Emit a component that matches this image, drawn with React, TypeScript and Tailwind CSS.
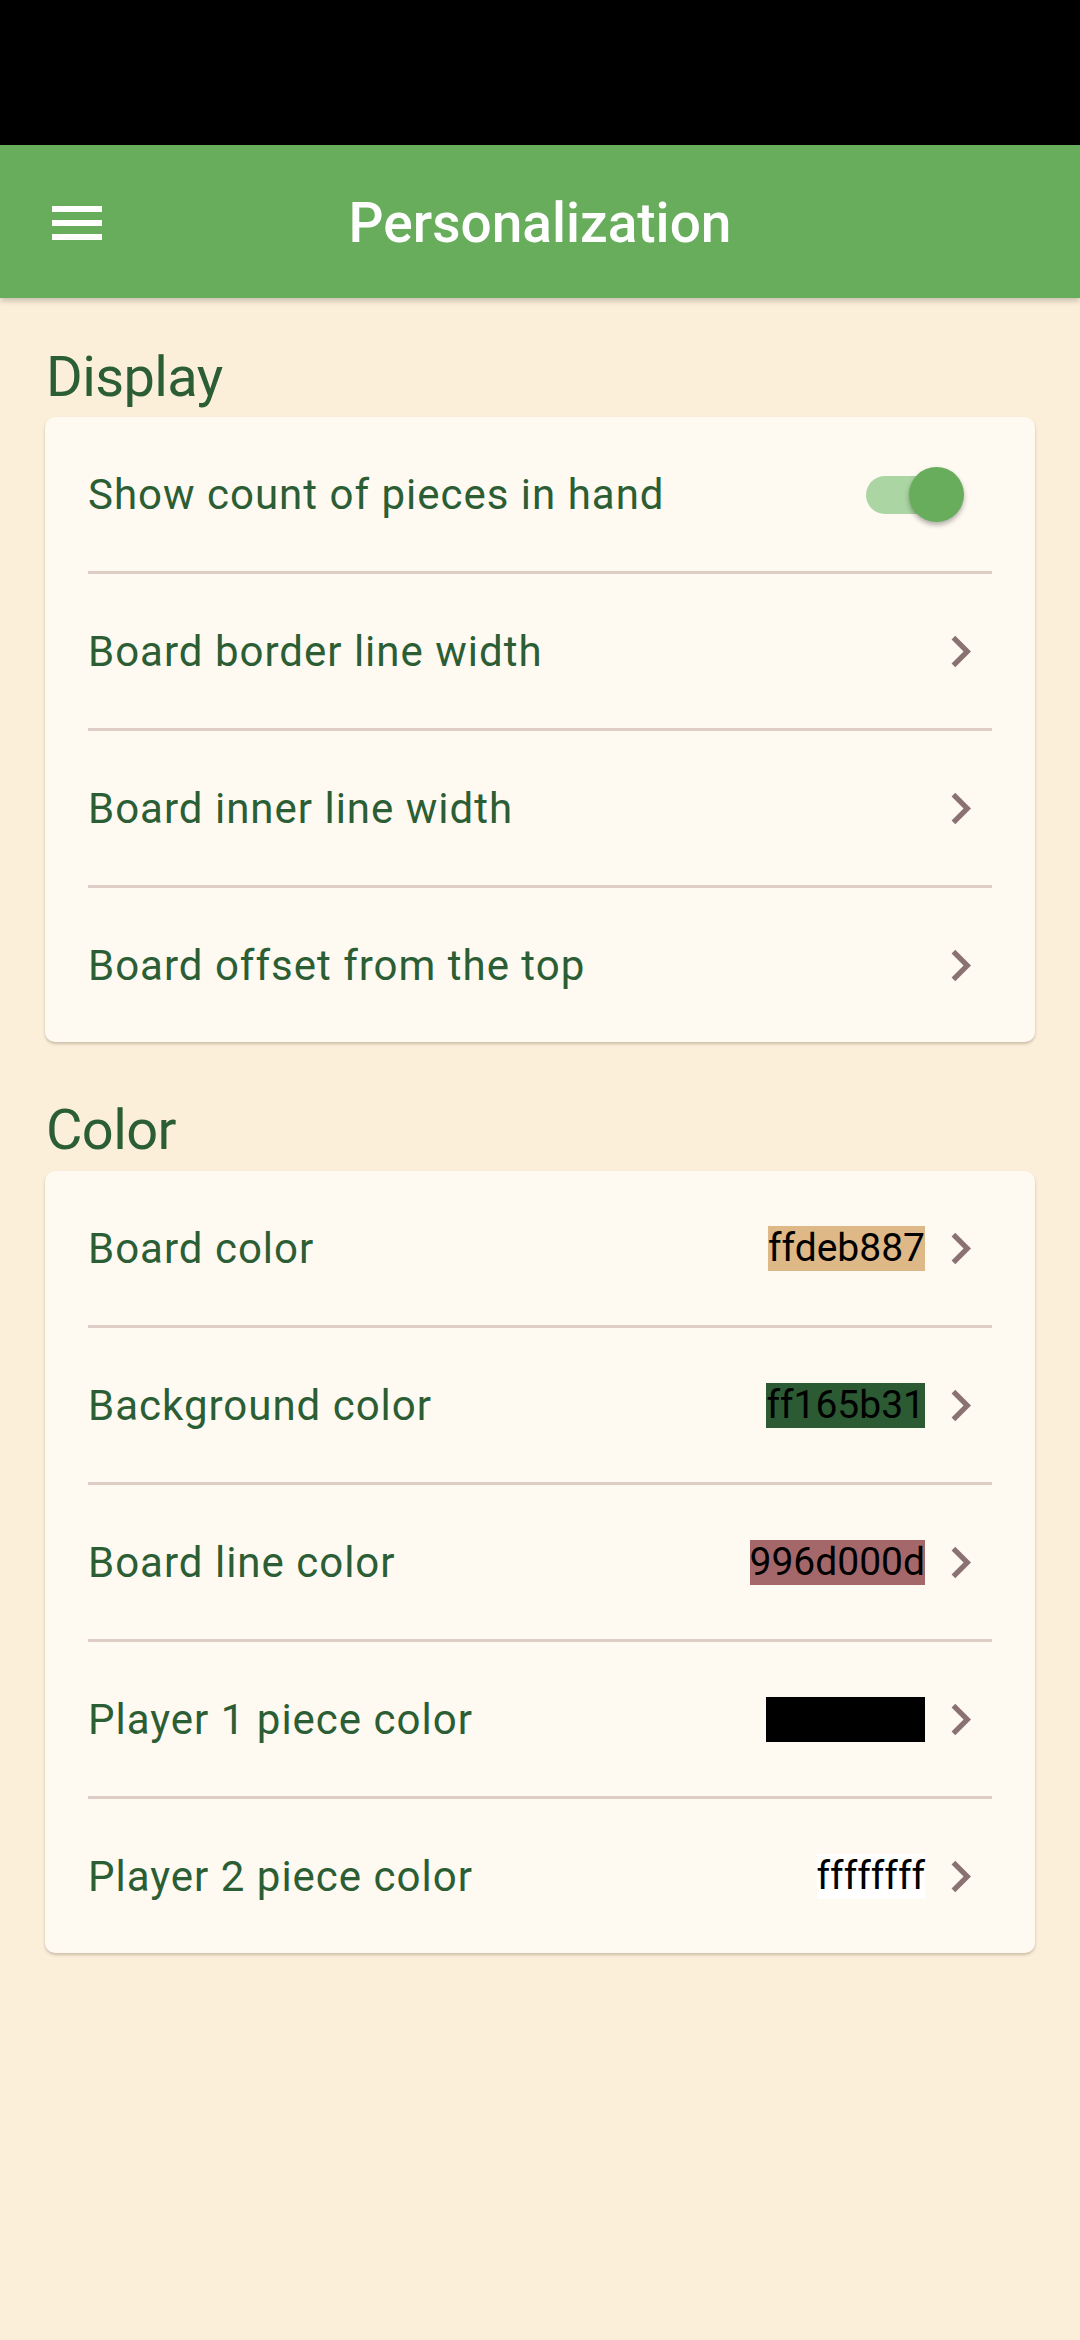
import React, { useState } from "react";

type ColorRow = {
  label: string;
  value: string;
  bg: string;
};

const colorRows: ColorRow[] = [
  { label: "Board color", value: "ffdeb887", bg: "bg-[#deb887]" },
  { label: "Background color", value: "ff165b31", bg: "bg-[#2b5a33]" },
  { label: "Board line color", value: "996d000d", bg: "bg-[#a4686a]" },
  { label: "Player 1 piece color", value: "ff000000", bg: "bg-black" },
  { label: "Player 2 piece color", value: "ffffffff", bg: "bg-white" },
];

const displayRows = [
  "Board border line width",
  "Board inner line width",
  "Board offset from the top",
];

function Chevron() {
  return (
    <svg viewBox="0 0 24 24" className="w-[63px] h-[63px] shrink-0" fill="#8a7272">
      <path d="M10 6L8.59 7.41 13.17 12l-4.58 4.59L10 18l6-6z" />
    </svg>
  );
}

function Divider() {
  return <div className="mx-[43px] h-[3px] bg-[#dfccc4]" />;
}

function Toggle({ on, onClick }: { on: boolean; onClick: () => void }) {
  return (
    <button onClick={onClick} className="relative w-[98px] h-[55px] mr-[28px] shrink-0">
      <span
        className={`absolute left-0 top-[9px] w-[89px] h-[38px] rounded-full ${
          on ? "bg-[#abd5a2]" : "bg-[#c9c0b8]"
        }`}
      />
      <span
        className={`absolute top-0 w-[55px] h-[55px] rounded-full shadow-[0_3px_5px_rgba(0,0,0,0.3)] ${
          on ? "right-0 bg-[#67ad5b]" : "left-[-9px] bg-[#f5f0e8]"
        }`}
      />
    </button>
  );
}

function SectionTitle({ children }: { children: React.ReactNode }) {
  return (
    <h2 className="h-[66px] leading-[66px] text-[56px] tracking-[-0.6px] text-[#2b5e34] pl-px">
      {children}
    </h2>
  );
}

export default function App() {
  const [showCount, setShowCount] = useState(true);

  return (
    <div className="min-h-[2340px] bg-[#fbefda] font-['Roboto',sans-serif]">
      {/* status bar */}
      <div className="h-[145px] bg-black" />

      {/* app bar */}
      <header className="h-[153px] bg-[#68ad5c] grid grid-cols-[1fr_auto_1fr] items-center shadow-[0_3px_6px_rgba(0,0,0,0.2)]">
        <div className="pl-[52px] mt-[2px] flex flex-col gap-[8px]">
          <span className="block w-[50px] h-[6px] bg-white" />
          <span className="block w-[50px] h-[6px] bg-white" />
          <span className="block w-[50px] h-[6px] bg-white" />
        </div>
        <h1 className="mt-[4px] text-white text-[55px] font-medium leading-none">Personalization</h1>
        <div />
      </header>

      <main className="px-[45px]">
        {/* Display */}
        <div className="mt-[46px]">
          <SectionTitle>Display</SectionTitle>
        </div>
        <div className="mt-[7px] bg-[#fef9f1] rounded-[10px] shadow-[0_2px_3px_rgba(90,70,40,0.28)]">
          <div className="h-[154px] flex items-center pl-[43px] pr-[43px]">
            <span className="flex-1 text-[42px] tracking-[1px] text-[#2b5e34]">
              Show count of pieces in hand
            </span>
            <Toggle on={showCount} onClick={() => setShowCount(!showCount)} />
          </div>
          {displayRows.map((label) => (
            <div key={label}>
              <Divider />
              <div className="h-[154px] flex items-center pl-[43px] pr-[43px]">
                <span className="flex-1 text-[42px] tracking-[1px] text-[#2b5e34]">{label}</span>
                <Chevron />
              </div>
            </div>
          ))}
        </div>

        {/* Color */}
        <div className="mt-[55px]">
          <SectionTitle>Color</SectionTitle>
        </div>
        <div className="mt-[8px] bg-[#fef9f1] rounded-[10px] shadow-[0_2px_3px_rgba(90,70,40,0.28)]">
          {colorRows.map((row, i) => (
            <div key={row.label}>
              {i > 0 && <Divider />}
              <div className="h-[154px] flex items-center pl-[43px] pr-[43px]">
                <span className="flex-1 text-[42px] tracking-[1px] text-[#2b5e34]">{row.label}</span>
                <span className={`${row.bg} text-[39px] leading-[45px] text-black mr-[4px]`}>
                  {row.value}
                </span>
                <Chevron />
              </div>
            </div>
          ))}
        </div>
      </main>
    </div>
  );
}
